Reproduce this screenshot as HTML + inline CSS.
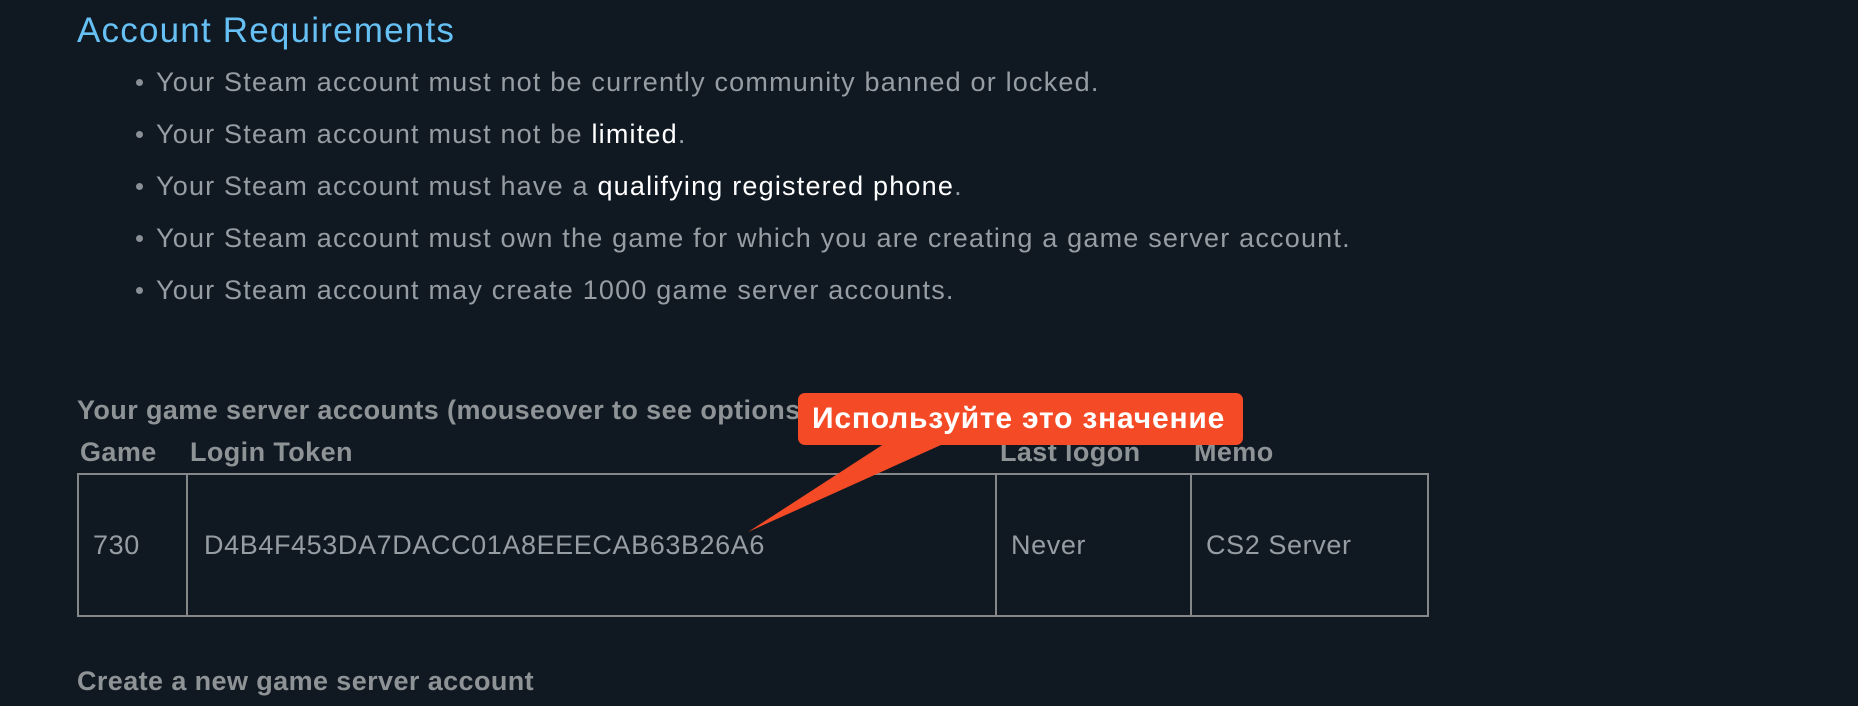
<!DOCTYPE html>
<html><head><meta charset="utf-8"><style>
body{margin:0;width:1858px;height:706px;background:#101822;overflow:hidden;font-family:"Liberation Sans",sans-serif;color:#969da3;position:relative}
.a{position:absolute;white-space:nowrap}
h1{position:absolute;left:77px;top:11px;margin:0;font-weight:normal;font-size:35px;letter-spacing:1.2px;color:#66c0f4}
.li{font-size:27px;letter-spacing:1.2px}
.li:before{content:"";position:absolute;left:-20px;top:12px;width:7px;height:7px;border-radius:50%;background:#8a9096}
.w{color:#fff}
.b{font-weight:bold;font-size:27px;letter-spacing:0.4px;color:#8e9396}
table{position:absolute;left:77px;top:473px;border-collapse:collapse}
td{border:2px solid #858789;height:140px;font-size:27px;letter-spacing:0.6px;padding:0 0 0 14px;vertical-align:middle}
</style></head><body>
<h1>Account Requirements</h1>
<div class="a li" style="left:156px;top:67px">Your Steam account must not be currently community banned or locked.</div>
<div class="a li" style="left:156px;top:119px">Your Steam account must not be <span class="w">limited</span>.</div>
<div class="a li" style="left:156px;top:171px">Your Steam account must have a <span class="w">qualifying registered phone</span>.</div>
<div class="a li" style="left:156px;top:223px">Your Steam account must own the game for which you are creating a game server account.</div>
<div class="a li" style="left:156px;top:275px">Your Steam account may create 1000 game server accounts.</div>
<div class="a b" style="left:77px;top:395px">Your game server accounts (mouseover to see options)</div>
<div class="a b" style="left:80px;top:437px">Game</div>
<div class="a b" style="left:190px;top:437px">Login Token</div>
<div class="a b" style="left:1000px;top:437px">Last logon</div>
<div class="a b" style="left:1194px;top:437px">Memo</div>
<table><tr>
<td style="width:93px">730</td>
<td style="width:791px;padding-left:16px">D4B4F453DA7DACC01A8EEECAB63B26A6</td>
<td style="width:179px">Never</td>
<td style="width:221px">CS2 Server</td>
</tr></table>
<div class="a b" style="left:77px;top:666px">Create a new game server account</div>
<svg class="a" style="left:0;top:0" width="1858" height="706"><polygon points="890,440 952,440 748,532" fill="#f44a25"/></svg>
<div class="a" style="left:798px;top:393px;width:445px;height:52px;background:#f44a25;border-radius:7px"></div>
<div class="a" style="left:812px;top:402px;font-size:30px;letter-spacing:0.8px;font-weight:bold;color:#fff;font-family:'Liberation Sans','DejaVu Sans',sans-serif">Используйте это значение</div>
</body></html>
